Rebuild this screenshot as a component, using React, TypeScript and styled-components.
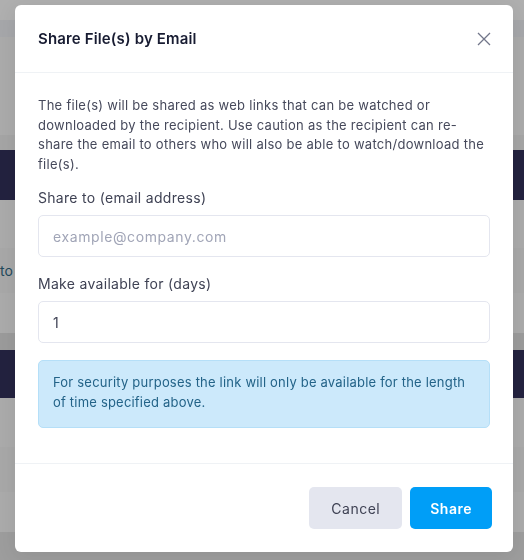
import React from "react";
import styled, { createGlobalStyle } from "styled-components";

const GlobalStyle = createGlobalStyle`
  * { box-sizing: border-box; }
  html, body { margin: 0; padding: 0; }
  body {
    font-family: Inter, "Noto Sans", Arial, sans-serif;
    background: #ababab;
    overflow: hidden;
  }
`;

// page behind the dialog, already dimmed by the overlay
const Page = styled.div`
  display: flex;
  flex-direction: column;
  width: 524px;
  height: 560px;
`;

const Band = styled.div<{ h: number; bg: string }>`
  height: ${(p) => p.h}px;
  background: ${(p) => p.bg};
  display: flex;
  align-items: center;
  font-size: 14px;
  color: #1f4a5c;
  white-space: nowrap;
  overflow: hidden;
`;

const bands = [
  { h: 20, bg: "#afafaf" },
  { h: 17, bg: "#a6a7aa" },
  { h: 98, bg: "#ababab" },
  { h: 15, bg: "#a5a5a5" },
  { h: 50, bg: "#23223f" },
  { h: 48, bg: "#ababab" },
  { h: 45, bg: "#a8a8a8", text: "to" },
  { h: 40, bg: "#ababab" },
  { h: 17, bg: "#9b9b9b" },
  { h: 48, bg: "#23223f" },
  { h: 49, bg: "#ababab" },
  { h: 45, bg: "#a8a8a8" },
  { h: 40, bg: "#ababab" },
  { h: 28, bg: "#9d9d9d" },
];

const Overlay = styled.div`
  position: fixed;
  inset: 0;
  display: flex;
  align-items: flex-start;
`;

const Dialog = styled.div`
  margin: 5px 0 0 15px;
  width: 498px;
  height: 547px;
  background: #ffffff;
  border-radius: 6px;
  display: flex;
  flex-direction: column;
  box-shadow: 0 4px 20px rgba(0, 0, 0, 0.08);
`;

const Header = styled.div`
  height: 68px;
  padding: 0 20px 0 23px;
  display: flex;
  align-items: center;
  justify-content: space-between;
  border-bottom: 1px solid #eff2f5;
`;

const Title = styled.h3`
  margin: 0;
  font-size: 15px;
  font-weight: 600;
  color: #181c32;
  letter-spacing: 0.15px;
`;

const CloseButton = styled.button`
  width: 18px;
  height: 18px;
  padding: 0;
  border: 0;
  background: none;
  display: flex;
  align-items: center;
  justify-content: center;
  cursor: pointer;
`;

const Body = styled.div`
  flex: 1;
  padding: 23px 23px 0;
  display: flex;
  flex-direction: column;
`;

const Intro = styled.p`
  margin: 0 0 13px;
  font-size: 13px;
  line-height: 19.5px;
  color: #46495b;
  letter-spacing: 0.27px;
`;

const Field = styled.div`
  display: flex;
  flex-direction: column;
  gap: 7px;
  margin-bottom: 16px;
`;

const Label = styled.label`
  font-size: 14px;
  line-height: 21px;
  color: #3f4254;
  letter-spacing: 0.3px;
`;

const Input = styled.input`
  height: 42px;
  width: 100%;
  border: 1px solid #e4e6ef;
  border-radius: 5px;
  padding: 0 14px;
  font-family: inherit;
  font-size: 14px;
  color: #3f4254;
  letter-spacing: 0.6px;
  outline: none;

  &::placeholder {
    color: #a1a5b7;
  }
`;

const Notice = styled.div`
  margin-top: 1px;
  padding: 12px 14px 15px;
  background: #cce9fb;
  border: 1px solid #b5dff8;
  border-radius: 5px;
  font-size: 13px;
  line-height: 19.5px;
  color: #236388;
  letter-spacing: 0.2px;
`;

const Footer = styled.div`
  height: 89px;
  border-top: 1px solid #eff2f5;
  padding: 0 21px 0 23px;
  display: flex;
  align-items: center;
  justify-content: flex-end;
  gap: 8px;
`;

const Button = styled.button<{ primary?: boolean }>`
  height: 42px;
  padding: 0 ${(p) => (p.primary ? 20 : 22)}px;
  border: 0;
  border-radius: 5px;
  font-family: inherit;
  font-size: 14px;
  letter-spacing: 0.5px;
  font-weight: ${(p) => (p.primary ? 600 : 400)};
  background: ${(p) => (p.primary ? "#009ef7" : "#e4e6ef")};
  color: ${(p) => (p.primary ? "#ffffff" : "#3f4254")};
  cursor: pointer;
`;

export default function App() {
  return (
    <>
      <GlobalStyle />
      <Page>
        {bands.map((b, i) => (
          <Band key={i} h={b.h} bg={b.bg}>
            {b.text}
          </Band>
        ))}
      </Page>
      <Overlay>
        <Dialog role="dialog">
          <Header>
            <Title>Share File(s) by Email</Title>
            <CloseButton aria-label="Close">
              <svg width="14" height="14" viewBox="0 0 14 14">
                <path d="M1 1L13 13M13 1L1 13" stroke="#72768a" strokeWidth="1.3" />
              </svg>
            </CloseButton>
          </Header>
          <Body>
            <Intro>
              The file(s) will be shared as web links that can be watched or downloaded by the
              recipient. Use caution as the recipient can re-share the email to others who will
              also be able to watch/download the file(s).
            </Intro>
            <Field>
              <Label>Share to (email address)</Label>
              <Input type="email" placeholder="example@company.com" />
            </Field>
            <Field>
              <Label>Make available for (days)</Label>
              <Input type="number" defaultValue={1} />
            </Field>
            <Notice>
              For security purposes the link will only be available for the length of time
              specified above.
            </Notice>
          </Body>
          <Footer>
            <Button>Cancel</Button>
            <Button primary>Share</Button>
          </Footer>
        </Dialog>
      </Overlay>
    </>
  );
}
